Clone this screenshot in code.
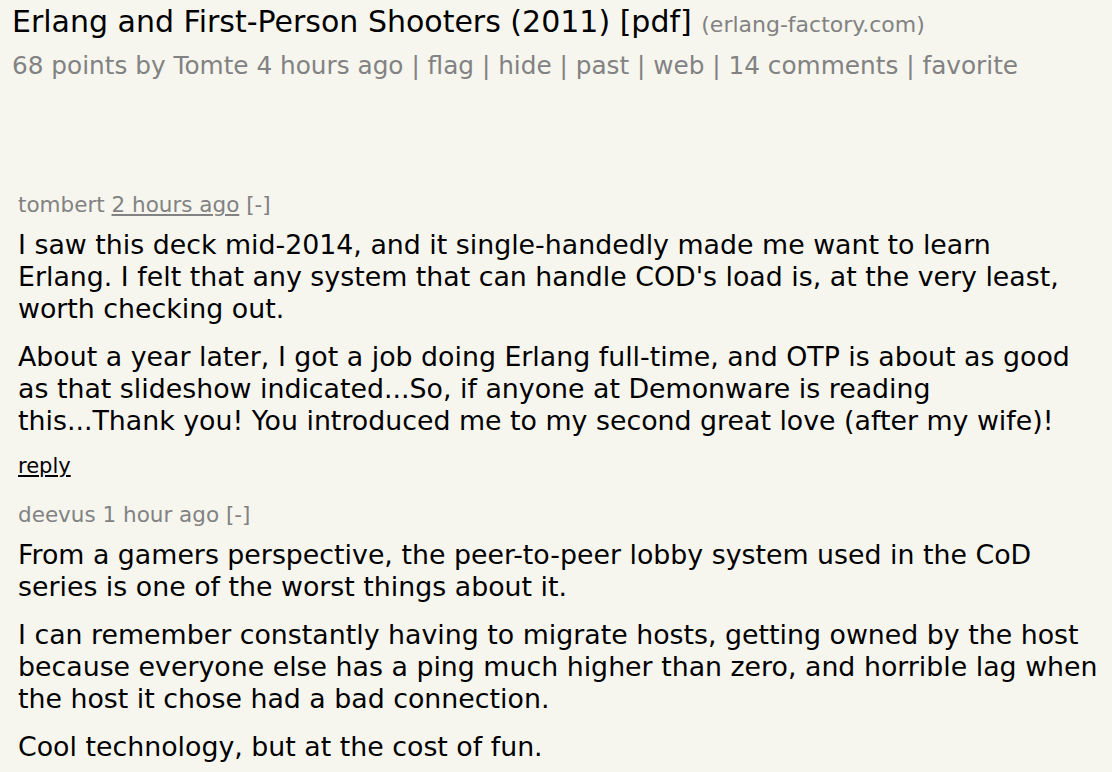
export default function App() {
  const font = { fontFamily: '"DejaVu Sans", Verdana, sans-serif' };
  return (
    <div className="min-h-[772px] w-[1112px] overflow-hidden bg-[#f6f6ef] text-black" style={font}>
      {/* Story */}
      <div className="px-[12px] pt-[4px]">
        <div className="whitespace-nowrap text-[30px] leading-[36px]">
          Erlang and First-Person Shooters (2011) [pdf]{" "}
          <span className="text-[22px] text-[#828282]">(erlang-factory.com)</span>
        </div>
        <div className="mt-[8px] whitespace-nowrap text-[24.75px] leading-[30px] text-[#828282]">
          68 points by Tomte 4 hours ago | flag | hide | past | web | 14 comments | favorite
        </div>
      </div>

      {/* Comments */}
      <div className="mt-[111px] pl-[18px] pr-[12px]">
        <div className="text-[21.5px] leading-[26px] text-[#828282]">
          tombert <span className="underline">2 hours ago</span> [-]
        </div>
        <div className="mt-[11px] whitespace-nowrap text-[26.8px] leading-[32px]">
          <p>
            I saw this deck mid-2014, and it single-handedly made me want to learn
            <br />
            Erlang. I felt that any system that can handle COD's load is, at the very least,
            <br />
            worth checking out.
          </p>
          <p className="mt-[16px]">
            About a year later, I got a job doing Erlang full-time, and OTP is about as good
            <br />
            as that slideshow indicated...So, if anyone at Demonware is reading
            <br />
            this...Thank you! You introduced me to my second great love (after my wife)!
          </p>
        </div>
        <div className="mt-[16px] text-[21px] leading-[26px] underline">reply</div>

        <div className="mt-[23px] text-[21.5px] leading-[26px] text-[#828282]">deevus 1 hour ago [-]</div>
        <div className="mt-[11px] whitespace-nowrap text-[26.8px] leading-[32px]">
          <p>
            From a gamers perspective, the peer-to-peer lobby system used in the CoD
            <br />
            series is one of the worst things about it.
          </p>
          <p className="mt-[16px]">
            I can remember constantly having to migrate hosts, getting owned by the host
            <br />
            because everyone else has a ping much higher than zero, and horrible lag when
            <br />
            the host it chose had a bad connection.
          </p>
          <p className="mt-[16px]">Cool technology, but at the cost of fun.</p>
        </div>
      </div>
    </div>
  );
}
